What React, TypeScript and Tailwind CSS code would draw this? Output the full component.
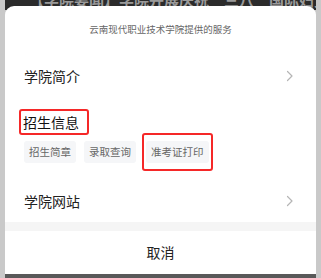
const font = { fontFamily: '"Noto Sans CJK SC", "Noto Sans", sans-serif' };

const Chevron = () => (
  <svg width="8" height="12" viewBox="0 0 8 12" fill="none" className="shrink-0">
    <path d="M1.5 1.5 L6 6 L1.5 10.5" stroke="#b5b5b5" strokeWidth="1.2" strokeLinecap="round" strokeLinejoin="round" />
  </svg>
);

const Row = ({ label }: { label: string }) => (
  <div className="flex h-[42px] shrink-0 items-center justify-between pl-[19px] pr-[22px]">
    <span className="text-[14px] text-[#222]">{label}</span>
    <Chevron />
  </div>
);

const Tag = ({ label, marked }: { label: string; marked?: boolean }) => (
  <div className={marked ? "rounded-[3px] border-2 border-[#f52828] px-[2px] py-[6px]" : ""}>
    <div className="flex h-[22px] items-center rounded-[3px] bg-[#f5f6f8] px-[5px] text-[10.5px] text-[#666]">{label}</div>
  </div>
);

export default function App() {
  return (
    <div className="flex h-[278px] w-[321px] flex-col overflow-hidden bg-[#c9c9c9]" style={font}>
      {/* backdrop page */}
      <div className="mx-[5px] h-[10px] shrink-0 overflow-hidden bg-[#2b2b2b]">
        <div className="-mt-[9px] whitespace-nowrap pl-[24px] text-[15px] font-bold leading-[18px] text-[#9a9a9a]">
          【学院要闻】学院开展庆祝“三八”国际妇女节
        </div>
      </div>

      {/* sheet */}
      <div className="-mt-[4px] mx-[5px] flex flex-1 flex-col rounded-t-[9px] bg-white">
        <div className="flex h-[49px] shrink-0 items-center justify-center pb-[2px] text-[9.5px] text-[#666]">
          云南现代职业技术学院提供的服务
        </div>

        <Row label="学院简介" />

        <div className="flex shrink-0 flex-col pb-[9px] pl-[14px] pt-[12px]">
          <div className="flex h-[26px] w-[70px] items-center rounded-[3px] border-2 border-[#f52828] pl-[2px]">
            <span className="text-[14px] text-[#111]">招生信息</span>
          </div>
          <div className="-mt-[2px] flex items-center pl-[5px]">
            <Tag label="招生简章" />
            <div className="w-[8px]" />
            <Tag label="录取查询" />
            <div className="w-[6px]" />
            <Tag label="准考证打印" marked />
          </div>
        </div>

        <Row label="学院网站" />

        <div className="h-[9px] shrink-0 bg-[#f5f5f5]" />

        <div className="flex flex-1 items-center justify-center text-[14px] text-[#222]">取消</div>
      </div>

      <div className="mx-[5px] h-[4px] shrink-0 bg-[#595959]" />
    </div>
  );
}
